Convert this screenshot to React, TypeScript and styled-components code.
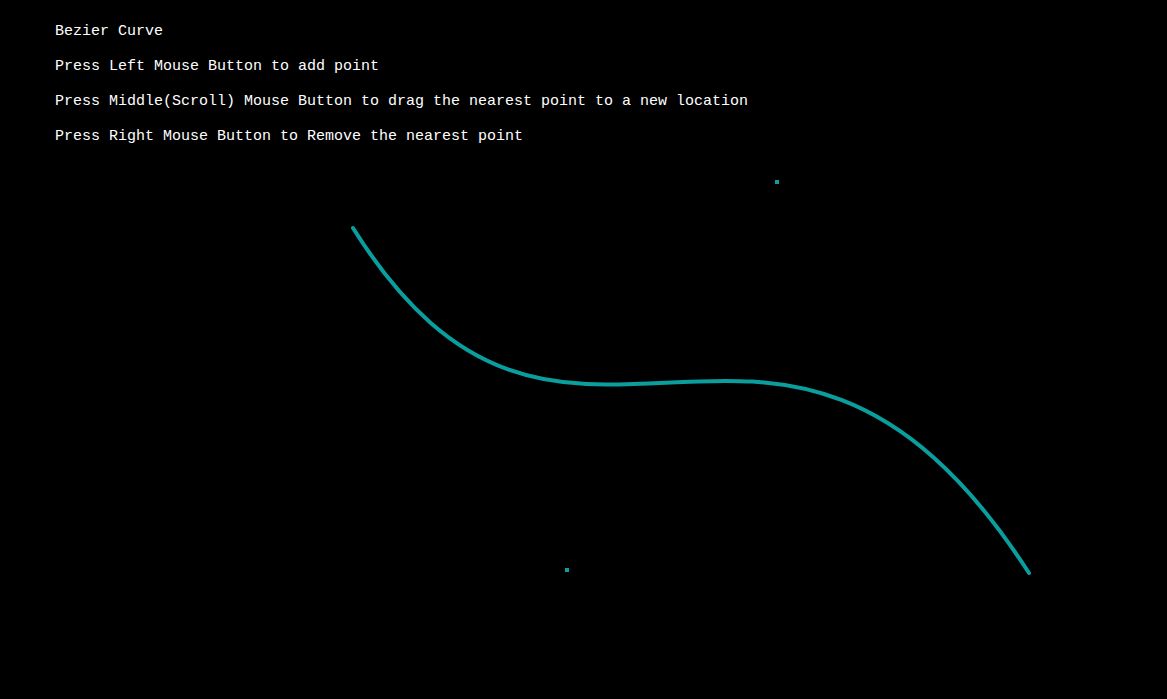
import React from "react";
import styled, { createGlobalStyle } from "styled-components";

const GlobalStyle = createGlobalStyle`
  html, body {
    margin: 0;
    padding: 0;
    background: #000;
  }
`;

const CURVE = "#0a9e9e";

type Point = { x: number; y: number };

const start: Point = { x: 353, y: 228 };
const control1: Point = { x: 567, y: 570 };
const control2: Point = { x: 777, y: 182 };
const end: Point = { x: 1029, y: 573 };

const lines = [
  "Bezier Curve",
  "Press Left Mouse Button to add point",
  "Press Middle(Scroll) Mouse Button to drag the nearest point to a new location",
  "Press Right Mouse Button to Remove the nearest point",
];

const App = () => {
  const d = `M ${start.x} ${start.y} C ${control1.x} ${control1.y}, ${control2.x} ${control2.y}, ${end.x} ${end.y}`;
  return (
    <Stage>
      <GlobalStyle />
      <Canvas width="1167" height="699" viewBox="0 0 1167 699">
        <path d={d} fill="none" stroke={CURVE} strokeWidth="4" strokeLinecap="round" />
        {[control1, control2].map((p, i) => (
          <rect key={i} x={p.x - 2} y={p.y - 2} width="4" height="4" fill={CURVE} />
        ))}
      </Canvas>
      <Legend>
        {lines.map((line) => (
          <Line key={line}>{line}</Line>
        ))}
      </Legend>
    </Stage>
  );
};

const Stage = styled.div`
  position: relative;
  width: 100vw;
  height: 100vh;
  background: #000;
  overflow: hidden;
`;

const Canvas = styled.svg`
  position: absolute;
  inset: 0;
  display: block;
`;

const Legend = styled.div`
  position: relative;
  display: flex;
  flex-direction: column;
  padding: 14px 0 0 55px;
`;

const Line = styled.div`
  font-family: "Liberation Mono", "DejaVu Sans Mono", monospace;
  font-size: 15px;
  line-height: 35px;
  color: #fff;
  white-space: pre;
`;

export default App;
